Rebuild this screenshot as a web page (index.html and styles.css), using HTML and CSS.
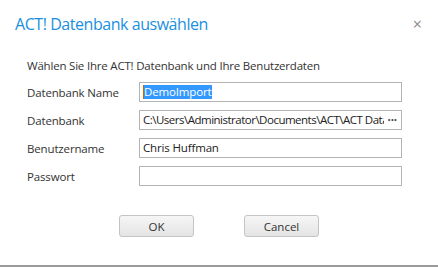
FILE: index.html
```html
<!DOCTYPE html>
<html lang="de">
<head>
    <meta charset="UTF-8">
    <title>ACT! Datenbank auswählen</title>
    <link rel="stylesheet" href="styles.css">
</head>
<body>
    <div class="dialog">
        <!-- Header -->
        <div class="dialog-header">
            <h1 class="dialog-title">ACT! Datenbank auswählen</h1>
            <span class="close-btn">&times;</span>
        </div>

        <!-- Form -->
        <div class="dialog-body">
            <p class="intro">Wählen Sie Ihre ACT! Datenbank und Ihre Benutzerdaten</p>
            <div class="form-grid">
                <label>Datenbank Name</label>
                <div class="field"><span class="selected">DemoImport</span></div>

                <label>Datenbank</label>
                <div class="field field-browse">
                    <span class="path">C:\Users\Administrator\Documents\ACT\ACT Data</span>
                    <span class="dots">&middot;&middot;&middot;</span>
                </div>

                <label>Benutzername</label>
                <div class="field">Chris Huffman</div>

                <label>Passwort</label>
                <div class="field"></div>
            </div>
        </div>

        <!-- Buttons -->
        <div class="dialog-footer">
            <button class="btn">OK</button>
            <button class="btn">Cancel</button>
        </div>
    </div>
</body>
</html>
```

FILE: styles.css
```css
* {
    margin: 0;
    padding: 0;
    box-sizing: border-box;
}

body {
    font-family: "Open Sans", "Noto Sans", sans-serif;
    background: #ffffff;
    color: #333333;
    width: 438px;
    height: 267px;
    overflow: hidden;
}

.dialog {
    height: 267px;
    border-bottom: 2px solid #9a9a9a;
    display: flex;
    flex-direction: column;
}

/* Header */
.dialog-header {
    display: flex;
    justify-content: space-between;
    align-items: center;
    padding: 11px 16px 0 15px;
    height: 36px;
}

.dialog-title {
    font-size: 16px;
    font-weight: 400;
    color: #1a8fe0;
    letter-spacing: -0.45px;
}

.close-btn {
    font-size: 16px;
    color: #8a8a8a;
    line-height: 1;
}

/* Body */
.dialog-body {
    padding: 22px 0 0 27px;
}

.intro {
    font-size: 11.5px;
    line-height: 16px;
    letter-spacing: -0.2px;
    margin-bottom: 8px;
}

.form-grid {
    display: grid;
    grid-template-columns: 112px 263px;
    row-gap: 8px;
    align-items: center;
}

.form-grid label {
    font-size: 11.5px;
    letter-spacing: -0.15px;
}

.field {
    height: 20px;
    border: 1px solid #b4b4b4;
    font-size: 11.5px;
    letter-spacing: -0.15px;
    color: #222222;
    padding: 0 3px;
    line-height: 18px;
    white-space: nowrap;
    overflow: hidden;
    display: flex;
    align-items: center;
}

.selected {
    background: #3399ff;
    color: #ffffff;
    line-height: 14px;
    border-left: 1px solid #d06000;
    padding-right: 1px;
}

.field-browse .path {
    flex: 1;
    overflow: hidden;
    letter-spacing: -0.5px;
}

.dots {
    padding: 0 1px 0 4px;
    font-weight: 700;
    color: #444444;
}

/* Footer */
.dialog-footer {
    display: flex;
    justify-content: center;
    gap: 50px;
    padding-top: 29px;
}

.btn {
    width: 75px;
    height: 22px;
    font-family: inherit;
    font-size: 11.5px;
    color: #333333;
    background: linear-gradient(#f6f6f6, #e4e4e4);
    border: 1px solid #c4c4c4;
    border-radius: 3px;
}
```
